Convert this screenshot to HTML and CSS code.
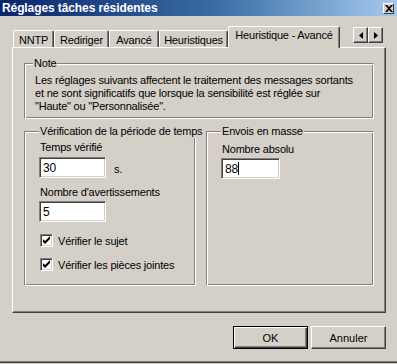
FILE: index.html
```html
<!DOCTYPE html>
<html>
<head>
  <meta charset="UTF-8">
  <title>Réglages tâches résidentes</title>
  <link rel="stylesheet" href="styles.css">
</head>
<body>
  <div class="window">
    <div class="titlebar">
      <span class="title">Réglages tâches résidentes</span>
      <span class="close-btn">
        <svg width="8" height="7" viewBox="0 0 8 7"><path d="M0 0h2l2 2 2-2h2L5 3.5 8 7H6L4 5 2 7H0l3-3.5z" fill="#000"/></svg>
      </span>
    </div>

    <div class="tabstrip">
      <div class="tab tab-nntp">NNTP</div>
      <div class="tab tab-redir">Rediriger</div>
      <div class="tab tab-adv">Avancé</div>
      <div class="tab tab-heur">Heuristiques</div>
      <div class="tab tab-heur-adv active">Heuristique - Avancé</div>
      <div class="tab-scroll">
        <span class="scroll-btn">
          <svg width="4" height="7" viewBox="0 0 4 7"><path d="M4 0v7L0 3.5z" fill="#000"/></svg>
        </span>
        <span class="scroll-btn">
          <svg width="4" height="7" viewBox="0 0 4 7"><path d="M0 0v7l4-3.5z" fill="#000"/></svg>
        </span>
      </div>
    </div>

    <div class="panel">
      <fieldset class="group note">
        <legend>Note</legend>
        <p>Les réglages suivants affectent le traitement des messages sortants<br>
        et ne sont significatifs que lorsque la sensibilité est réglée sur<br>
        "Haute" ou "Personnalisée".</p>
      </fieldset>

      <div class="group-row">
        <fieldset class="group period">
          <legend>Vérification de la période de temps</legend>
          <div class="label first">Temps vérifié</div>
          <div class="field-row">
            <div class="edit edit-time">30</div>
            <span class="unit">s.</span>
          </div>
          <div class="label second">Nombre d'avertissements</div>
          <div class="edit edit-time">5</div>
          <div class="check-row row1">
            <span class="check">
              <svg width="9" height="9" viewBox="0 0 9 9"><path d="M1 3v3l2 2 5-5V0L3 5z" fill="#000"/></svg>
            </span>
            <span>Vérifier le sujet</span>
          </div>
          <div class="check-row row2">
            <span class="check">
              <svg width="9" height="9" viewBox="0 0 9 9"><path d="M1 3v3l2 2 5-5V0L3 5z" fill="#000"/></svg>
            </span>
            <span>Vérifier les pièces jointes</span>
          </div>
        </fieldset>

        <fieldset class="group bulk">
          <legend>Envois en masse</legend>
          <div class="label">Nombre absolu</div>
          <div class="edit edit-count">88<span class="caret"></span></div>
        </fieldset>
      </div>
    </div>

    <div class="dialog-buttons">
      <button class="btn default">OK</button>
      <button class="btn">Annuler</button>
    </div>
  </div>
</body>
</html>
```

FILE: styles.css
```css
body {
  margin: 0;
  background: #d4d0c8;
  font-family: "Liberation Sans", Arial, sans-serif;
  font-size: 11px;
  letter-spacing: -0.2px;
  white-space: nowrap;
  color: #000;
}

.window {
  width: 397px;
  height: 364px;
  box-sizing: border-box;
  background: #d4d0c8;
  box-shadow: inset 0 -1px 0 #d4d0c8, inset 0 -2px 0 #404040, inset 0 -3px 0 #808080;
  display: flex;
  flex-direction: column;
}

/* barre de titre */
.titlebar {
  height: 16px;
  flex-shrink: 0;
  display: flex;
  align-items: center;
  justify-content: space-between;
  padding: 0 3px 0 2px;
  background: linear-gradient(to right, #0a246a 0%, #3a6ea5 55%, #a6caf0 100%);
}

.title {
  color: #fff;
  font-weight: bold;
  font-size: 12px;
  letter-spacing: -0.1px;
  line-height: 16px;
}

.close-btn {
  width: 11px;
  height: 11px;
  box-sizing: border-box;
  display: flex;
  align-items: center;
  justify-content: center;
  background: #d4d0c8;
  border: 1px solid;
  border-color: #fff #404040 #404040 #fff;
}

/* onglets */
.tabstrip {
  display: flex;
  align-items: flex-end;
  height: 21px;
  margin-top: 10px;
  padding-left: 13px;
  position: relative;
  z-index: 1;
}

.tab {
  height: 17px;
  box-sizing: border-box;
  display: flex;
  align-items: center;
  justify-content: center;
  border: 1px solid;
  border-bottom: none;
  border-color: #fff #404040 #fff #fff;
  box-shadow: inset -1px 0 0 #808080;
  border-radius: 2px 2px 0 0;
  padding-top: 1px;
  background: #d4d0c8;
}

.tab-nntp { width: 41px; }
.tab-redir { width: 55px; }
.tab-adv { width: 50px; }
.tab-heur { width: 69px; }

.tab.active {
  width: 112px;
  height: 22px;
  margin-bottom: -1px;
  padding-top: 0;
  padding-bottom: 5px;
}

.tab-scroll {
  display: flex;
  align-self: flex-start;
  margin-top: 1px;
  margin-left: 13px;
}

.scroll-btn {
  width: 15px;
  height: 16px;
  box-sizing: border-box;
  display: flex;
  align-items: center;
  justify-content: center;
  border: 1px solid;
  border-color: #fff #404040 #404040 #fff;
  box-shadow: inset -1px -1px 0 #808080;
}

/* panneau */
.panel {
  width: 374px;
  height: 266px;
  margin-left: 12px;
  box-sizing: border-box;
  border: 1px solid;
  border-color: #fff #404040 #404040 #fff;
  box-shadow: inset -1px -1px 0 #808080;
  padding: 9px 11px 0 11px;
}

.group {
  margin: 0;
  padding: 0 8px;
  border: 1px solid;
  border-color: #808080 #fff #fff #808080;
  box-shadow: inset 1px 1px 0 #fff, inset -1px -1px 0 #808080;
  min-width: 0;
}

.group legend {
  padding: 0 1px;
  line-height: 13px;
  background: #d4d0c8;
}

.note p {
  margin: 4px 0 5px 2px;
  line-height: 13px;
}

.group-row {
  display: flex;
  gap: 10px;
  margin-top: 6px;
}

.period {
  width: 172px;
  box-sizing: border-box;
  padding-left: 14px;
  padding-bottom: 14px;
}

.bulk {
  flex: 1;
  padding-left: 14px;
}

.label {
  line-height: 13px;
  margin-left: 1px;
}

.period .label.first { margin-top: 3px; }
.period .label.second { margin-top: 8px; }
.bulk .label { margin-top: 5px; }

.field-row {
  display: flex;
  align-items: center;
  gap: 8px;
  margin-top: 3px;
}

.edit {
  height: 21px;
  box-sizing: border-box;
  background: #fff;
  border: 1px solid;
  border-color: #808080 #fff #fff #808080;
  box-shadow: inset 1px 1px 0 #404040, inset -1px -1px 0 #d4d0c8;
  padding: 0 3px;
  display: flex;
  align-items: center;
  font-size: 12px;
}

.edit-time { width: 67px; }
.period .label.second + .edit { margin-top: 2px; }

.edit-count {
  width: 59px;
  margin-top: 2px;
}

.caret {
  width: 1px;
  height: 13px;
  background: #000;
}

.unit {
  padding-top: 2px;
}

.check-row {
  display: flex;
  align-items: center;
  gap: 5px;
  margin-left: 1px;
  height: 13px;
}

.row1 { margin-top: 12px; }
.row2 { margin-top: 11px; }

.check {
  width: 13px;
  height: 13px;
  box-sizing: border-box;
  background: #fff;
  border: 1px solid;
  border-color: #808080 #fff #fff #808080;
  box-shadow: inset 1px 1px 0 #404040, inset -1px -1px 0 #d4d0c8;
  display: flex;
  align-items: center;
  justify-content: center;
}

/* boutons */
.dialog-buttons {
  display: flex;
  justify-content: flex-end;
  gap: 3px;
  margin-top: 13px;
  padding-right: 11px;
}

.btn {
  width: 75px;
  height: 23px;
  box-sizing: border-box;
  font-family: "Liberation Sans", Arial, sans-serif;
  font-size: 11px;
  color: #000;
  background: #d4d0c8;
  border: 1px solid;
  border-color: #fff #404040 #404040 #fff;
  box-shadow: inset -1px -1px 0 #808080;
  padding: 0;
}

.btn.default {
  border: 1px solid #000;
  box-shadow: inset 1px 1px 0 #fff, inset -1px -1px 0 #404040, inset -2px -2px 0 #808080;
}
```
